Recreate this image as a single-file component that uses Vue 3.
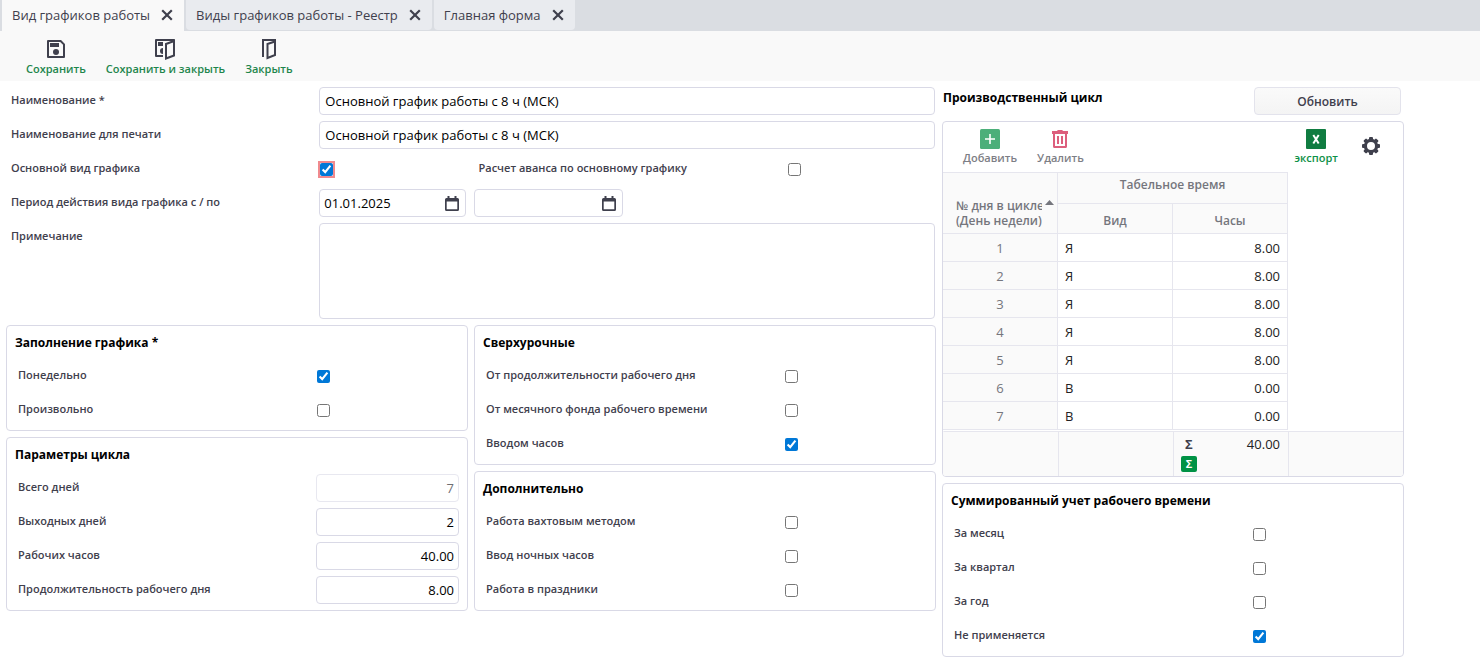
<script setup>
import { reactive } from 'vue'

const tabs = [
  { title: 'Вид графиков работы', active: true },
  { title: 'Виды графиков работы - Реестр', active: false },
  { title: 'Главная форма', active: false },
]

const form = reactive({
  name: 'Основной график работы с 8 ч (МСК)',
  printName: 'Основной график работы с 8 ч (МСК)',
  main: true,
  advance: false,
  from: '01.01.2025',
  to: '',
  note: '',
})

const fill = reactive([
  { id: 'weekly', label: 'Понедельно', value: true },
  { id: 'custom', label: 'Произвольно', value: false },
])

const params = reactive([
  { id: 'total', label: 'Всего дней', value: '7', disabled: true },
  { id: 'off', label: 'Выходных дней', value: '2', disabled: false },
  { id: 'hours', label: 'Рабочих часов', value: '40.00', disabled: false },
  { id: 'length', label: 'Продолжительность рабочего дня', value: '8.00', disabled: false },
])

const overtime = reactive([
  { id: 'ot-day', label: 'От продолжительности рабочего дня', value: false },
  { id: 'ot-month', label: 'От месячного фонда рабочего времени', value: false },
  { id: 'ot-input', label: 'Вводом часов', value: true },
])

const extra = reactive([
  { id: 'shift', label: 'Работа вахтовым методом', value: false },
  { id: 'night', label: 'Ввод ночных часов', value: false },
  { id: 'holiday', label: 'Работа в праздники', value: false },
])

const summary = reactive([
  { id: 'sum-month', label: 'За месяц', value: false },
  { id: 'sum-quarter', label: 'За квартал', value: false },
  { id: 'sum-year', label: 'За год', value: false },
  { id: 'sum-none', label: 'Не применяется', value: true },
])

const days = [
  { n: 1, kind: 'Я', hours: '8.00' },
  { n: 2, kind: 'Я', hours: '8.00' },
  { n: 3, kind: 'Я', hours: '8.00' },
  { n: 4, kind: 'Я', hours: '8.00' },
  { n: 5, kind: 'Я', hours: '8.00' },
  { n: 6, kind: 'В', hours: '0.00' },
  { n: 7, kind: 'В', hours: '0.00' },
]
</script>

<template>
  <div class="page">
    <nav class="tabs">
      <div v-for="t in tabs" :key="t.title" class="tab" :class="{ active: t.active }">
        <button type="button" class="tab-title">{{ t.title }}</button>
        <button type="button" class="tab-close" aria-label="Закрыть вкладку">
          <svg width="12" height="12" viewBox="0 0 12 12"><path d="M1.2 1.2 10.8 10.8M10.8 1.2 1.2 10.8" fill="none" stroke="#3f404d" stroke-width="2.2" /></svg>
        </button>
      </div>
    </nav>

    <header class="toolbar">
      <button type="button" class="tool">
        <svg width="22" height="22" viewBox="0 0 22 22">
          <path d="M3 3H15.600L19 6.400V19H3Z" fill="none" stroke="#3f404d" stroke-width="2" stroke-linejoin="round" />
          <rect x="5" y="5" width="9" height="4" fill="#3f404d" />
          <circle cx="11" cy="14" r="3" fill="#3f404d" />
        </svg>
        <span>Сохранить</span>
      </button>
      <button type="button" class="tool">
        <svg width="22" height="22" viewBox="0 0 22 22">
          <path d="M9 18H2V2H20V17" fill="none" stroke="#3f404d" stroke-width="2" stroke-linejoin="round" />
          <rect x="4" y="4" width="5" height="4" fill="#3f404d" />
          <path d="M9 10A3 3 0 0 0 9 16Z" fill="#3f404d" />
          <path d="M12 6 20 3V17.500L12 20.500Z" fill="#f9f9f9" stroke="#3f404d" stroke-width="2" />
        </svg>
        <span>Сохранить и закрыть</span>
      </button>
      <button type="button" class="tool">
        <svg width="22" height="22" viewBox="0 0 22 22">
          <path d="M5 19V2H17V5" fill="none" stroke="#3f404d" stroke-width="2" />
          <path d="M9.500 6 17 3.500V17L9.500 20Z" fill="#f9f9f9" stroke="#3f404d" stroke-width="2" />
        </svg>
        <span>Закрыть</span>
      </button>
    </header>

    <main class="content">
      <div class="left">
        <div class="form">
          <div class="row">
            <label for="name">Наименование *</label>
            <input id="name" v-model="form.name" type="text" class="field">
          </div>
          <div class="row">
            <label for="print-name">Наименование для печати</label>
            <input id="print-name" v-model="form.printName" type="text" class="field">
          </div>
          <div class="row quad">
            <label for="main">Основной вид графика</label>
            <input id="main" v-model="form.main" type="checkbox" class="invalid">
            <label for="advance">Расчет аванса по основному графику</label>
            <input id="advance" v-model="form.advance" type="checkbox">
          </div>
          <div class="row">
            <label for="from">Период действия вида графика с / по</label>
            <div class="dates">
              <div class="date">
                <input id="from" v-model="form.from" type="text">
                <button type="button" aria-label="Календарь">
                  <svg width="14" height="15" viewBox="0 0 14 15"><path d="M2.500 0H4.500V2H9.500V0H11.500V2H12.500Q14 2 14 3.500V13.500Q14 15 12.500 15H1.500Q0 15 0 13.500V3.500Q0 2 1.500 2H2.500ZM1.700 5.500V13.300H12.300V5.500Z" fill="#3f404d" fill-rule="evenodd" /></svg>
                </button>
              </div>
              <div class="date">
                <input v-model="form.to" type="text" aria-label="Дата по">
                <button type="button" aria-label="Календарь">
                  <svg width="14" height="15" viewBox="0 0 14 15"><path d="M2.500 0H4.500V2H9.500V0H11.500V2H12.500Q14 2 14 3.500V13.500Q14 15 12.500 15H1.500Q0 15 0 13.500V3.500Q0 2 1.500 2H2.500ZM1.700 5.500V13.300H12.300V5.500Z" fill="#3f404d" fill-rule="evenodd" /></svg>
                </button>
              </div>
            </div>
          </div>
          <div class="row top">
            <label for="note">Примечание</label>
            <textarea id="note" v-model="form.note" class="field area"></textarea>
          </div>
        </div>

        <div class="panels">
          <div class="stack">
            <section class="panel">
              <h2>Заполнение графика *</h2>
              <div v-for="r in fill" :key="r.id" class="prow">
                <label :for="r.id">{{ r.label }}</label>
                <input :id="r.id" v-model="r.value" type="checkbox">
              </div>
            </section>
            <section class="panel">
              <h2>Параметры цикла</h2>
              <div v-for="r in params" :key="r.id" class="prow">
                <label :for="r.id">{{ r.label }}</label>
                <input :id="r.id" v-model="r.value" type="text" class="field number" :disabled="r.disabled">
              </div>
            </section>
          </div>
          <div class="stack">
            <section class="panel">
              <h2>Сверхурочные</h2>
              <div v-for="r in overtime" :key="r.id" class="prow">
                <label :for="r.id">{{ r.label }}</label>
                <input :id="r.id" v-model="r.value" type="checkbox">
              </div>
            </section>
            <section class="panel">
              <h2>Дополнительно</h2>
              <div v-for="r in extra" :key="r.id" class="prow">
                <label :for="r.id">{{ r.label }}</label>
                <input :id="r.id" v-model="r.value" type="checkbox">
              </div>
            </section>
          </div>
        </div>
      </div>

      <div class="right">
        <div class="cycle-head">
          <h2>Производственный цикл</h2>
          <button type="button" class="refresh">Обновить</button>
        </div>

        <section class="card">
          <div class="card-tools">
            <button type="button" class="ctool">
              <svg width="20" height="20" viewBox="0 0 20 20"><rect width="20" height="20" rx="1.500" fill="#4caf7a" /><path d="M10 5V15M5 10H15" stroke="#fff" stroke-width="1.600" /></svg>
              <span>Добавить</span>
            </button>
            <button type="button" class="ctool">
              <svg width="20" height="20" viewBox="0 0 20 20">
                <path d="M3 4V17.500Q3 19 4.500 19H15.500Q17 19 17 17.500V4Z M5 5V17H15V5Z" fill="#dd5f7d" fill-rule="evenodd" />
                <path d="M2 2H7L7.800 1H12.200L13 2H18V5H2Z" fill="#dd5f7d" />
                <path d="M8 7V15M12 7V15" stroke="#dd5f7d" stroke-width="2" />
              </svg>
              <span>Удалить</span>
            </button>
            <button type="button" class="ctool export">
              <svg width="20" height="20" viewBox="0 0 20 20"><rect width="20" height="20" rx="1" fill="#107c41" /><path d="M7.300 6 12.700 14.500M12.700 6 7.300 14.500" stroke="#fff" stroke-width="2" /></svg>
              <span>экспорт</span>
            </button>
            <button type="button" class="gear" aria-label="Настройки">
              <svg width="18" height="18" viewBox="-9 -9 18 18">
                <circle r="5.600" fill="none" stroke="#3f404d" stroke-width="3.200" />
                <g fill="#3f404d">
                  <rect v-for="a in 8" :key="a" x="-2" y="-9" width="4" height="4" rx="1" :transform="`rotate(${a * 45})`" />
                </g>
              </svg>
            </button>
          </div>

          <table class="grid">
            <thead>
              <tr>
                <th rowspan="2" class="first">
                  <div class="sort">
                    <span>№ дня в цикле<br>(День недели)</span>
                    <svg width="9" height="5" viewBox="0 0 9 5"><path d="M0 5 4.500 0 9 5Z" fill="#75767d" /></svg>
                  </div>
                </th>
                <th colspan="2" class="group">Табельное время</th>
              </tr>
              <tr>
                <th class="sub">Вид</th>
                <th class="sub">Часы</th>
              </tr>
            </thead>
            <tbody>
              <tr v-for="d in days" :key="d.n">
                <td class="num">{{ d.n }}</td>
                <td>{{ d.kind }}</td>
                <td class="hours">{{ d.hours }}</td>
              </tr>
            </tbody>
          </table>
          <table class="totals">
            <tbody>
              <tr>
                <td></td>
                <td></td>
                <td>
                  <div class="total"><b>Σ</b><span>40.00</span></div>
                  <button type="button" class="sigma">Σ</button>
                </td>
                <td></td>
              </tr>
            </tbody>
          </table>
        </section>

        <section class="panel">
          <h2>Суммированный учет рабочего времени</h2>
          <div v-for="r in summary" :key="r.id" class="prow">
            <label :for="r.id">{{ r.label }}</label>
            <input :id="r.id" v-model="r.value" type="checkbox">
          </div>
        </section>
      </div>
    </main>
  </div>
</template>

<style>
body {
  background: #fff;
}
</style>

<style scoped>
.page,
.page button,
.page input,
.page textarea {
  font-family: "Open Sans", "Noto Sans", sans-serif;
  box-sizing: border-box;
}

.page {
  color: #3f404d;
  font-size: 13px;
}

button {
  border: 0;
  padding: 0;
  background: none;
  color: inherit;
}

svg {
  display: block;
}

.tabs {
  display: flex;
  align-items: flex-start;
  gap: 2px;
  height: 31px;
  padding-left: 2px;
  background: #dadde2;
}

.tab {
  display: flex;
  align-items: center;
  gap: 11px;
  height: 30px;
  padding: 0 11px 0 10px;
  background: #e9ebef;
  border-radius: 0 0 4px 4px;
}

.tab.active {
  padding-bottom: 1px;
  background: #f9f9f9;
  border-radius: 0;
}

.tab-title {
  font-size: 13px;
  line-height: 18px;
}

.toolbar {
  display: flex;
  gap: 20px;
  height: 50px;
  padding: 7px 26px 0;
  box-sizing: border-box;
  background: #f9f9f9;
}

.tool {
  display: flex;
  flex-direction: column;
  align-items: center;
  gap: 1px;
  height: 40px;
  color: #1e864c;
  font-size: 11px;
  font-weight: 600;
  line-height: 16px;
}

.content {
  display: grid;
  grid-template-columns: 930fr 462fr;
  gap: 6px;
  align-items: start;
  padding: 6px 76px 4px 6px;
}

.left,
.form,
.stack,
.right {
  display: flex;
  flex-direction: column;
  gap: 6px;
  min-width: 0;
}

.row {
  display: grid;
  grid-template-columns: 308fr 615fr;
  align-items: center;
  min-height: 28px;
  padding: 0 1px 0 5px;
}

.row.quad {
  grid-template-columns: 308fr 159fr 309fr 147fr;
}

.row.top {
  align-items: start;
}

label {
  padding-bottom: 2px;
  color: #3f404d;
  font-size: 11px;
  font-weight: 600;
  line-height: 16px;
}

.row.top label {
  padding-top: 5px;
}

.field {
  width: 100%;
  min-width: 0;
  height: 28px;
  margin: 0;
  padding: 0 4px 0 5px;
  border: 1px solid #d9d9e6;
  border-radius: 4px;
  outline: 0;
  background: #fff;
  color: #000;
  font-size: 13px;
}

.field.area {
  display: block;
  height: 96px;
  resize: none;
}

.field.number {
  text-align: right;
}

.field:disabled {
  border-color: #e8e8f0;
  color: #6f6f73;
}

input[type="checkbox"] {
  width: 13px;
  height: 13px;
  margin: 0 0 0 1px;
  accent-color: #0078d7;
}

.quad input[type="checkbox"] {
  margin-left: 0;
}

.quad input.invalid {
  margin-left: 1px;
  outline: 2px solid #f08a8e;
  outline-offset: 0;
}

.dates {
  display: grid;
  grid-template-columns: 147fr 148fr 304fr;
  gap: 8px;
}

.date {
  display: flex;
  align-items: center;
  min-width: 0;
  height: 26px;
  padding: 0 6px 0 4px;
  border: 1px solid #d9d9e6;
  border-radius: 4px;
}

.date input {
  flex: 1;
  width: 0;
  min-width: 0;
  padding: 0;
  border: 0;
  outline: 0;
  background: none;
  color: #000;
  font-size: 13px;
}

.panels {
  display: grid;
  grid-template-columns: 1fr 1fr;
  gap: 6px;
  align-items: start;
}

.panel {
  display: flex;
  flex-direction: column;
  gap: 6px;
  padding: 8px 8px 6px 11px;
  border: 1px solid #d9d9e6;
  border-radius: 4px;
}

h2 {
  margin: 0;
  color: #000;
  font-size: 12px;
  font-weight: 700;
  line-height: 18px;
}

.panel h2 {
  margin: 0 0 4px -3px;
}

.prow {
  display: grid;
  grid-template-columns: 298fr 143fr;
  align-items: center;
  height: 28px;
}

.cycle-head {
  display: flex;
  justify-content: space-between;
  align-items: flex-start;
  padding: 0 3px 0 1px;
}

.cycle-head h2 {
  padding-top: 2px;
}

.refresh {
  width: 147px;
  height: 28px;
  border: 1px solid #e3e3ec;
  border-radius: 4px;
  background: linear-gradient(#fafafa, #f4f4f4);
  font-size: 12px;
  font-weight: 600;
}

.card {
  overflow: hidden;
  border: 1px solid #d9d9e6;
  border-radius: 4px;
}

.card-tools {
  display: flex;
  align-items: flex-start;
  gap: 20px;
  height: 50px;
  padding: 7px 23px 0 20px;
  box-sizing: border-box;
}

.ctool {
  display: flex;
  flex-direction: column;
  align-items: center;
  gap: 1px;
  color: #7d7e85;
  font-size: 11px;
  font-weight: 600;
  line-height: 16px;
}

.ctool.export {
  margin-left: auto;
  color: #0e9147;
}

.gear {
  margin: 8px 0 0 4px;
}

table {
  border-collapse: separate;
  border-spacing: 0;
  table-layout: fixed;
}

.grid {
  width: 75%;
  border-top: 1px solid #e6e6ee;
}

th,
td {
  box-sizing: border-box;
  padding: 0;
  border-right: 1px solid #e6e6ee;
  border-bottom: 1px solid #e6e6ee;
}

th {
  background: #fafafa;
  color: #75767d;
  font-size: 12px;
  font-weight: 600;
  line-height: 15px;
}

.group {
  height: 31px;
  padding-bottom: 8px;
}

.sub {
  height: 30px;
  padding-top: 4px;
}

.first {
  vertical-align: bottom;
  padding: 0 3px 5px 13px;
}

.sort {
  display: flex;
  justify-content: space-between;
}

.sort span {
  width: 86px;
  overflow: hidden;
  text-align: left;
  white-space: nowrap;
}

.sort svg {
  flex: none;
  margin-top: 2px;
}

.grid td {
  height: 28px;
  padding: 0 7px;
  color: #222;
  font-size: 13px;
}

.grid td.num {
  background: #fafafa;
  color: #75767d;
  text-align: center;
}

.grid td.hours {
  text-align: right;
}

.totals {
  width: 100%;
  margin-top: 1px;
}

.totals td {
  height: 45px;
  border-top: 1px solid #e6e6ee;
  border-right: 0;
  border-bottom: 0;
  border-left: 1px solid #e6e6ee;
  background: #fafafa;
  vertical-align: top;
  padding: 3px 8px 0 7px;
}

.totals td:first-child {
  border-left-color: transparent;
}

.total {
  display: flex;
  justify-content: space-between;
  padding-left: 4px;
  color: #222;
  line-height: 18px;
}

.total b {
  color: #3f404d;
}

.sigma {
  display: block;
  width: 16px;
  height: 16px;
  margin-top: 3px;
  border-radius: 2px;
  background: #009245;
  color: #fff;
  font-size: 11px;
  font-weight: 700;
  line-height: 16px;
}
</style>
